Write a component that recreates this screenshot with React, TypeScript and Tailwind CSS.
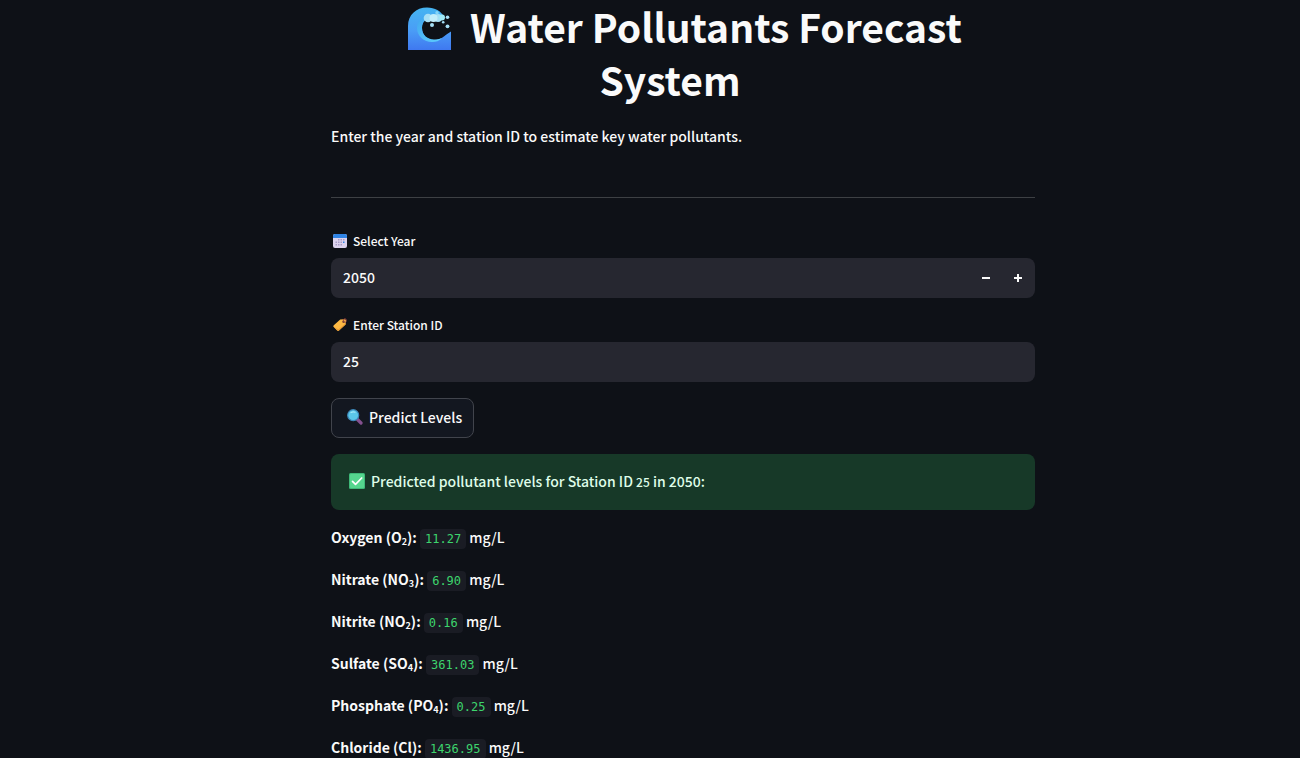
import { useState } from 'react';

function WaveIcon() {
  return (
    <svg viewBox="0 0 44 44" className="mr-[18px] ml-1 inline-block size-11 align-[-8px]" aria-hidden="true">
      <defs>
        <linearGradient id="wave-body" x1="0" y1="0" x2="0" y2="1">
          <stop offset="0" stopColor="#45b5f2" />
          <stop offset="0.55" stopColor="#4a9cf6" />
          <stop offset="1" stopColor="#3f78f0" />
        </linearGradient>
        <linearGradient id="wave-curl" x1="0" y1="0" x2="1" y2="1">
          <stop offset="0" stopColor="#3fa4ee" />
          <stop offset="1" stopColor="#5fd0ff" />
        </linearGradient>
      </defs>
      <path d="M0 43V19C0 8 8 0.500 19 0.500C27 0.500 33 4 36 10L31 14C23 9 14 12 14 21C14 28 19 33 26 33C34 33 35 29 43 24.500V43Z" fill="url(#wave-body)" />
      <path d="M17 8C12 11 9 16 9 21C9 29 16 35 24 35C28 35 31 34 34 31C31 32 29 32.500 26 32.500C19 32 14 28 14 21C14 17 15 14 18 12Z" fill="url(#wave-curl)" />
      <g fill="#a6dff6">
        <circle cx="20" cy="11" r="4.300" />
        <circle cx="30" cy="11" r="4" />
        <circle cx="25.500" cy="11" r="4" fill="#c2eefb" />
        <circle cx="29" cy="5.800" r="1.700" fill="#85d5f7" />
        <circle cx="34" cy="10.500" r="3" fill="#9fe8f5" />
        <circle cx="39.500" cy="10.300" r="1.800" />
        <circle cx="35.200" cy="15.300" r="1.300" />
        <circle cx="39.500" cy="19.300" r="1.900" />
        <circle cx="24" cy="18" r="2" />
      </g>
    </svg>
  );
}

function CalendarIcon() {
  return (
    <svg viewBox="0 0 14 14" className="size-[14px]" aria-hidden="true">
      <rect width="14" height="14" rx="2" fill="#dcd3ee" />
      <path d="M0 4V2Q0 0 2 0H12Q14 0 14 2V4Z" fill="#2f83e4" />
      <g fill="#a79bc6">
        <path d="M5 5h1.500v1.500H5zM7.500 5H9v1.500H7.500zM10 5h1.500v1.500H10zM2.500 7.500H4V9H2.500zM5 7.500h1.500V9H5zM7.500 7.500H9V9H7.500zM2.500 10H4v1.500H2.500zM5 10h1.500v1.500H5zM7.500 10H9v1.500H7.500z" />
      </g>
      <path d="M10 7.500h1.500V9H10z" fill="#2f83e4" />
    </svg>
  );
}

function TagIcon() {
  return (
    <svg viewBox="0 0 14 14" className="size-[14px]" aria-hidden="true">
      <path d="M7.200 1.600L11.500 1.200Q13 1.200 13 2.600L12.600 6.500L6 12.500Q5 13.300 4.100 12.400L0.700 9Q-0.100 8.100 0.800 7.200Z" fill="#fdb944" />
      <path d="M0.500 8.500L4.500 12.500Q5.200 13 6 12.500L12.600 6.500L12.700 5.300L5.300 11.600Z" fill="#e89b35" />
      <circle cx="10.500" cy="3.800" r="1.200" fill="#78452f" />
      <path d="M10.300 3.800Q10 0.600 12 0.600Q14 1 13.300 3.400Q12.700 4.800 11.200 4.400" fill="none" stroke="#9a4046" strokeWidth="0.800" />
    </svg>
  );
}

function MagnifierIcon() {
  return (
    <svg viewBox="0 0 16 16" className="size-4" aria-hidden="true">
      <path d="M9.500 9.500L14 14" stroke="#84508f" strokeWidth="3.200" strokeLinecap="round" />
      <circle cx="6.200" cy="6.200" r="5.500" fill="#5bc8ea" stroke="#3e88ba" strokeWidth="1.200" />
      <path d="M4 3.500Q6 2.400 8 3.200" stroke="#a4e9fa" strokeWidth="1.200" fill="none" strokeLinecap="round" />
    </svg>
  );
}

function CheckIcon() {
  return (
    <svg viewBox="0 0 16 16" className="size-4" aria-hidden="true">
      <rect width="16" height="16" rx="1.500" fill="#3fb978" />
      <rect x="1" y="1" width="14" height="14" rx="1" fill="#55d68e" />
      <path d="M3.500 8.300L6.500 11.300L12.700 5" fill="none" stroke="#fff" strokeWidth="1.700" strokeLinecap="round" strokeLinejoin="round" />
    </svg>
  );
}

const results = [
  { name: 'Oxygen', formula: 'O', count: '2', value: '11.27' },
  { name: 'Nitrate', formula: 'NO', count: '3', value: '6.90' },
  { name: 'Nitrite', formula: 'NO', count: '2', value: '0.16' },
  { name: 'Sulfate', formula: 'SO', count: '4', value: '361.03' },
  { name: 'Phosphate', formula: 'PO', count: '4', value: '0.25' },
  { name: 'Chloride', formula: 'Cl', count: '', value: '1436.95' },
];

export default function App() {
  const [year, setYear] = useState(2050);
  const [station, setStation] = useState('25');

  return (
    <div className="min-h-screen bg-[#0e1117] pl-[66px] font-['Noto_Sans_CJK_SC',sans-serif] text-[14px] font-medium text-[#fafafa]">
      <main className="mx-auto flex max-w-[704px] flex-col">
        <h1 className="text-center text-[39px] leading-[53px] font-bold">
          <WaveIcon />
          Water Pollutants Forecast System
          <span className="inline-block w-[26px]" />
        </h1>
        <p className="mt-[18px] leading-6">Enter the year and station ID to estimate key water pollutants.</p>
        <hr className="mt-[49px] border-[#3d4044]" />

        <label htmlFor="year" className="mt-[33px] flex h-5 items-center gap-[6px] pl-[2px] text-[12px]">
          <CalendarIcon />
          Select Year
        </label>
        <div className="mt-[7px] flex h-10 items-center rounded-lg bg-[#262730] pr-px">
          <input
            id="year"
            inputMode="numeric"
            value={year}
            onChange={(e) => setYear(Number(e.target.value) || 0)}
            className="h-full min-w-0 flex-1 bg-transparent px-3 pb-[2px] outline-none"
          />
          <button type="button" aria-label="Decrease year" onClick={() => setYear(year - 1)} className="flex h-full w-8 items-center justify-center">
            <svg viewBox="0 0 8 8" className="size-2" aria-hidden="true">
              <path d="M0 3h8v2H0z" fill="#fafafa" />
            </svg>
          </button>
          <button type="button" aria-label="Increase year" onClick={() => setYear(year + 1)} className="flex h-full w-8 items-center justify-center">
            <svg viewBox="0 0 8 8" className="size-2" aria-hidden="true">
              <path d="M0 3h3V0h2v3h3v2H5v3H3V5H0z" fill="#fafafa" />
            </svg>
          </button>
        </div>

        <label htmlFor="station" className="mt-[17px] flex h-5 items-center gap-[6px] pl-[2px] text-[12px]">
          <TagIcon />
          Enter Station ID
        </label>
        <input
          id="station"
          value={station}
          onChange={(e) => setStation(e.target.value)}
          className="mt-[7px] h-10 rounded-lg bg-[#262730] px-3 pb-[2px] outline-none"
        />

        <button type="button" className="mt-4 flex h-10 items-center gap-[6px] self-start rounded-lg border border-[#41444c] bg-[#131720] pr-[11px] pb-[2px] pl-[15px]">
          <MagnifierIcon />
          Predict Levels
        </button>

        <div role="status" className="mt-4 flex h-14 items-center gap-[6px] rounded-lg bg-[#173928] px-[18px] pb-[2px] text-[#dffde9]">
          <CheckIcon />
          <p>
            Predicted pollutant levels for Station ID <code className="font-['Noto_Sans_CJK_SC',sans-serif] text-[12px]">25</code> in 2050:
          </p>
        </div>

        <div className="mt-[14px] flex flex-col gap-4">
          {results.map(({ name, formula, count, value }) => (
            <p key={name} className="h-[26px] leading-[26px] whitespace-nowrap">
              <strong className="font-bold">
                {name} ({formula}
                {count && <sub className="text-[9px]">{count}</sub>}):
              </strong>{' '}
              <code className="rounded bg-[#1a1c24] px-[5px] py-[3px] font-['DejaVu_Sans_Mono',monospace] text-[12px] font-normal text-[#3dd56d]">{value}</code> mg/L
            </p>
          ))}
        </div>
      </main>
    </div>
  );
}
